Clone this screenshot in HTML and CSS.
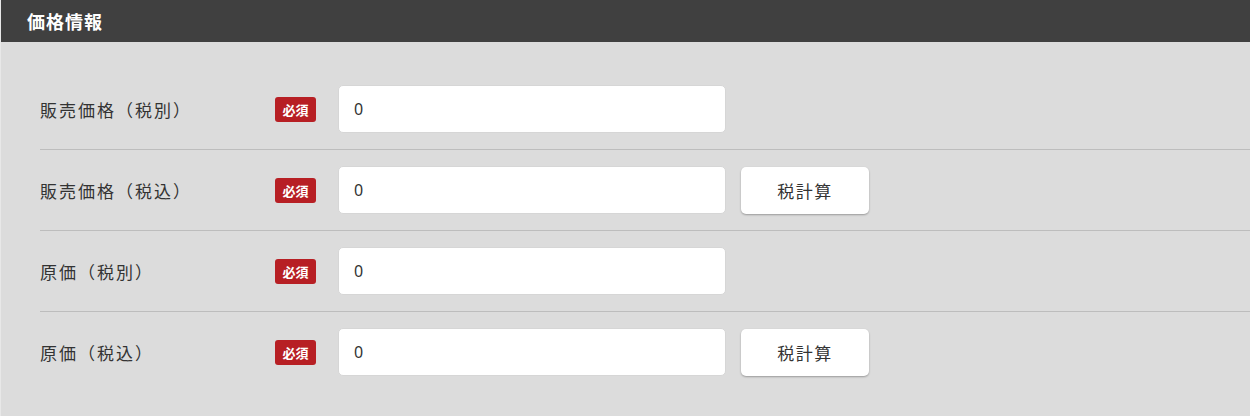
FILE: index.html
```html
<!DOCTYPE html>
<html lang="ja">
<head>
<meta charset="utf-8">
<link rel="stylesheet" href="styles.css">
</head>
<body>
<section class="panel">
  <header class="panel-head">価格情報</header>
  <div class="panel-body">
    <div class="row">
      <div class="label">販売価格（税別）</div>
      <span class="badge">必須</span>
      <input class="field" type="text" value="0">
    </div>
    <div class="row">
      <div class="label">販売価格（税込）</div>
      <span class="badge">必須</span>
      <input class="field" type="text" value="0">
      <button class="btn" type="button">税計算</button>
    </div>
    <div class="row">
      <div class="label">原価（税別）</div>
      <span class="badge">必須</span>
      <input class="field" type="text" value="0">
    </div>
    <div class="row">
      <div class="label">原価（税込）</div>
      <span class="badge">必須</span>
      <input class="field" type="text" value="0">
      <button class="btn" type="button">税計算</button>
    </div>
  </div>
</section>
</body>
</html>
```

FILE: styles.css
```css
html, body {
  margin: 0;
  padding: 0;
  background: #dcdcdc;
}
body {
  font-family: "Noto Sans CJK JP", "Noto Sans", sans-serif;
  color: #333;
}
.panel {
  border-left: 1px solid #e8e8e8;
  min-height: 416px;
  box-sizing: border-box;
}
.panel-head {
  height: 42px;
  background: #404040;
  color: #fff;
  font-size: 18px;
  font-weight: 700;
  letter-spacing: 1px;
  line-height: 42px;
  padding-left: 26px;
}
.panel-body {
  padding: 27px 0 0 39px;
}
.row {
  display: flex;
  align-items: center;
  padding: 16px 0;
  border-bottom: 1px solid #bdbdbd;
}
.row:last-child {
  border-bottom: none;
}
.label {
  width: 235px;
  font-size: 17px;
  letter-spacing: 2px;
  color: #333;
}
.badge {
  width: 41px;
  height: 25px;
  line-height: 25px;
  text-align: center;
  background: #b71f24;
  color: #fff;
  font-size: 13px;
  font-weight: 700;
  border-radius: 3px;
  margin-right: 22px;
}
.field {
  width: 388px;
  height: 48px;
  box-sizing: border-box;
  border: 1px solid #d6d6d6;
  border-radius: 5px;
  background: #fff;
  padding: 0 15px;
  font-family: "Noto Sans", sans-serif;
  font-size: 16px;
  color: #333;
  margin: 0;
  outline: none;
}
.btn {
  width: 128px;
  height: 47px;
  margin-left: 15px;
  border: none;
  border-radius: 5px;
  background: #fff;
  box-shadow: 0 1px 2px rgba(0,0,0,0.3);
  font-family: "Noto Sans CJK JP", sans-serif;
  font-size: 17px;
  letter-spacing: 1.5px;
  color: #333;
  padding: 0;
}
```
